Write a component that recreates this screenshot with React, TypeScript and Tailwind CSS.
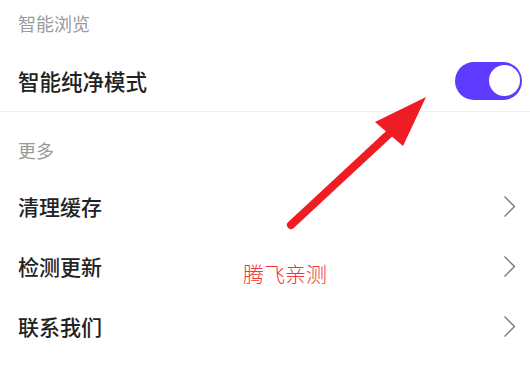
import React from "react";

const FONT = { fontFamily: '"Noto Sans CJK SC", "Noto Sans", sans-serif' };

/* ---------- small pieces ---------- */
function Chevron() {
  return (
    <svg width="13" height="23" viewBox="0 0 13 23" fill="none" className="shrink-0">
      <path d="M1.5 1.5 L11.5 11.5 L1.5 21.5" stroke="#7a7a7a" strokeWidth="1.4" />
    </svg>
  );
}

function Toggle() {
  return (
    <div className="w-[67px] h-[38px] rounded-full bg-[#5f3bff] flex items-center justify-end pr-[2px]">
      <div className="w-[31px] h-[31px] rounded-full bg-white" />
    </div>
  );
}

function LinkRow({ label }: { label: string }) {
  return (
    <div className="h-[60px] flex items-center justify-between pl-[18px] pr-[14px]">
      <span className="text-[21px] leading-[26px] font-medium text-[#222]">{label}</span>
      <Chevron />
    </div>
  );
}

/* ---------- page ---------- */
export default function App() {
  return (
    <div className="relative w-[530px] h-[367px] bg-white overflow-hidden" style={FONT}>
      {/* section: smart browsing */}
      <div className="h-[46px] pt-[12px] pl-[18px]">
        <span className="block text-[18px] leading-[22px] text-[#9a9a9a]">智能浏览</span>
      </div>
      <div className="h-[66px] pt-1 flex items-center justify-between pl-[18px] pr-[8px] border-b border-[#efefef]">
        <span className="text-[21.5px] leading-[26px] font-medium text-[#222]">智能纯净模式</span>
        <Toggle />
      </div>

      {/* section: more */}
      <div className="h-[64px] pt-[27px] pl-[18px]">
        <span className="block text-[18px] leading-[22px] text-[#9a9a9a]">更多</span>
      </div>
      <LinkRow label="清理缓存" />
      <LinkRow label="检测更新" />
      <LinkRow label="联系我们" />

      {/* annotation overlay */}
      <svg className="absolute inset-0 pointer-events-none" width="530" height="367" viewBox="0 0 530 367">
        <line x1="291" y1="225" x2="390" y2="133" stroke="#ee1d24" strokeWidth="8" strokeLinecap="round" />
        <polygon points="426,97 375,122 403,146" fill="#ee1d24" />
      </svg>
      <span className="absolute left-[243px] top-[260px] text-[21px] leading-[26px] font-light text-[#f0363a]">
        腾飞亲测
      </span>
    </div>
  );
}
